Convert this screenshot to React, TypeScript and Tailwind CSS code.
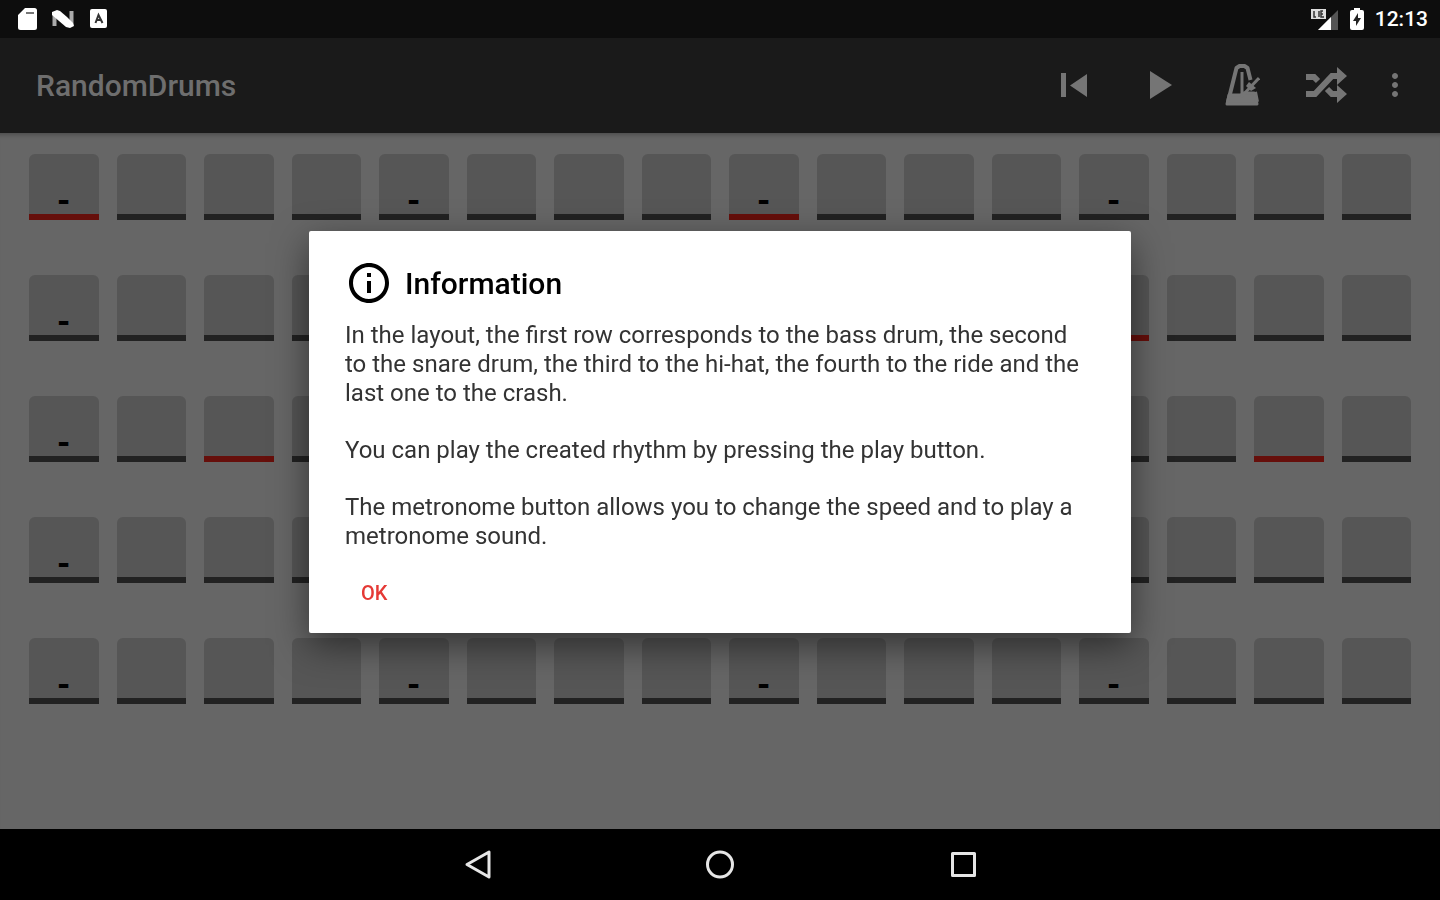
import { useState } from "react";
import { MdMoreVert, MdOutlineInfo, MdPlayArrow } from "react-icons/md";

const ACCENTS = [[0, 8], [4, 12], [2, 14], [], []];
const BEATS = [[0, 4, 8, 12], [0], [0], [0], [0, 4, 8, 12]];
const ROW_NAMES = ["Bass drum", "Snare drum", "Hi-hat", "Ride", "Crash"];

function StatusBar() {
  return (
    <div className="flex h-[38px] items-center justify-between bg-[#0d0d0d] pl-[17px] pr-3 text-white">
      <div className="flex items-center gap-3.5">
        <svg className="h-6 w-5" viewBox="0 0 20 24" fill="#fff" aria-hidden="true">
          <path d="M8 1h9.500a2.500 2.500 0 0 1 2.500 2.500v17a2.500 2.500 0 0 1-2.500 2.500h-14a2.500 2.500 0 0 1-2.500-2.500V8z" />
          <path d="M9 6h8" stroke="#777" strokeWidth="2" />
        </svg>
        <svg className="h-5 w-6" viewBox="0 0 24 20" aria-hidden="true">
          <path d="M3.500 3v14M20.500 2v14" stroke="#aaa" strokeWidth="4" />
          <path d="M1 3l5-2 3 1 7 6 6 6 1 3-4 2-4-1-7-6-7-6z" fill="#fff" />
        </svg>
        <svg className="h-5 w-5" viewBox="0 0 20 20" aria-hidden="true">
          <rect x="1" y="0" width="17" height="19" rx="2" fill="#fff" />
          <path d="M6.500 14l3-8 4 8M8 11h4" stroke="#333" strokeWidth="2" fill="none" />
        </svg>
      </div>
      <div className="flex items-center gap-2.5">
        <svg className="h-6 w-7" viewBox="0 0 28 24" aria-hidden="true">
          <path d="M27 3v20H7z" fill="#555" />
          <path d="M20 10v13H7z" fill="#fff" />
          <rect x="0" y="2" width="15" height="10" fill="#ddd" />
          <path d="M3 4v6h2M8 4v6M12 4h-2v6h3M10 7h2" stroke="#333" strokeWidth="1.500" fill="none" />
        </svg>
        <svg className="h-6 w-4" viewBox="0 0 16 24" aria-hidden="true">
          <path d="M5 1h6v2h2a2 2 0 0 1 2 2v16a2 2 0 0 1-2 2H3a2 2 0 0 1-2-2V5a2 2 0 0 1 2-2h2z" fill="#fff" />
          <path d="M9 6l-5 8h3v5l5-8H9z" fill="#222" />
        </svg>
        <span className="text-[21px] font-medium leading-6">12:13</span>
      </div>
    </div>
  );
}

function Toolbar() {
  return (
    <header className="flex h-[95px] items-center justify-between bg-[#1a1a1a] pl-9 pr-[18px] text-[#757575]">
      <h1 className="text-[30px] font-medium text-[#6e6e6e]">RandomDrums</h1>
      <div className="flex items-center pb-0.5">
        <button aria-label="Back to start" className="flex w-[84px] justify-center">
          <svg className="h-7 w-7" viewBox="0 0 28 28" fill="currentColor" aria-hidden="true">
            <path d="M1 2h5v24H1zM27 3v23L10 14.500z" />
          </svg>
        </button>
        <button aria-label="Play" className="flex w-[84px] justify-center">
          <MdPlayArrow className="h-12 w-12" />
        </button>
        <button aria-label="Metronome" className="flex w-[84px] justify-center">
          <svg className="h-11 w-9" viewBox="0 0 36 44" fill="none" stroke="currentColor" strokeLinejoin="round" aria-hidden="true">
            <path d="M4 39l8.500-34 3-2h5l3 2 3 12M31 29l2 10" strokeWidth="4" />
            <path d="M5 32h12l2-2h11l3 11H3z" fill="currentColor" strokeWidth="3" />
            <path d="M18 9v22" strokeWidth="3" />
            <path d="M17 34l18-19" strokeWidth="3" />
            <path d="M25 19l7 6-5 3-5-5z" fill="currentColor" stroke="none" />
          </svg>
        </button>
        <button aria-label="Shuffle" className="flex w-[84px] justify-center">
          <svg className="h-10 w-11" viewBox="0 0 44 40" fill="none" stroke="currentColor" strokeWidth="6" aria-hidden="true">
            <path d="M2 12h8l4 4M2 29h9l17-18h7M23 24l5 5h6" />
            <path d="M33 2l10 9-10 9zM33 20l10 9-10 9z" fill="currentColor" stroke="none" />
          </svg>
        </button>
        <button aria-label="More options" className="flex w-[54px] justify-center">
          <MdMoreVert className="h-9 w-9" />
        </button>
      </div>
    </header>
  );
}

function Pad({ label, beat, accent }: { label: string; beat: boolean; accent: boolean }) {
  const [on, setOn] = useState(beat);

  return (
    <button
      aria-label={label}
      aria-pressed={on}
      onClick={() => setOn(!on)}
      className={`flex h-[66px] items-end justify-center rounded-t-md border-b-[6px] bg-[#565656] text-[32px] font-black leading-[26px] text-black ${accent ? "border-[#660f0b]" : "border-[#222222]"}`}
    >
      {on ? "-" : ""}
    </button>
  );
}

function InfoDialog({ onClose }: { onClose: () => void }) {
  return (
    <div className="fixed inset-0 flex items-center justify-center px-4 pb-9">
      <div role="dialog" aria-labelledby="info-title" className="w-full max-w-[822px] rounded-xs bg-white px-9 pb-4 pt-7 shadow-[0_12px_36px_rgba(0,0,0,0.5)]">
        <div className="flex h-12 items-center gap-3">
          <MdOutlineInfo className="h-12 w-12 text-black" />
          <h2 id="info-title" className="text-[30px] font-medium text-black">Information</h2>
        </div>
        <div className="mt-3.5 space-y-7 pr-3 text-[24px] leading-[29px] text-[#333333]">
          <p>In the layout, the first row corresponds to the bass drum, the second to the snare drum, the third to the hi-hat, the fourth to the ride and the last one to the crash.</p>
          <p>You can play the created rhythm by pressing the play button.</p>
          <p>The metronome button allows you to change the speed and to play a metronome sound.</p>
        </div>
        <button onClick={onClose} className="mt-4.5 flex h-12 items-center px-4 text-[20px] font-medium text-[#e53935]">
          OK
        </button>
      </div>
    </div>
  );
}

function NavBar() {
  return (
    <nav className="flex h-[71px] items-center justify-center gap-[211px] bg-black">
      <button aria-label="Back">
        <svg className="h-8 w-8" viewBox="0 0 32 32" fill="none" stroke="#e6e6e6" strokeWidth="3" strokeLinejoin="round" aria-hidden="true">
          <path d="M28 3v25L6 15.500z" />
        </svg>
      </button>
      <button aria-label="Home">
        <svg className="h-8 w-8" viewBox="0 0 32 32" fill="none" stroke="#e6e6e6" strokeWidth="3" aria-hidden="true">
          <circle cx="16" cy="15.500" r="12.500" />
        </svg>
      </button>
      <button aria-label="Recent apps">
        <svg className="h-8 w-8" viewBox="0 0 32 32" fill="none" stroke="#e6e6e6" strokeWidth="3" strokeLinejoin="round" aria-hidden="true">
          <rect x="5.500" y="4.500" width="22" height="22" />
        </svg>
      </button>
    </nav>
  );
}

export default function App() {
  const [open, setOpen] = useState(true);

  return (
    <div className="flex min-h-screen flex-col bg-[#666666] font-['Roboto',sans-serif]">
      <StatusBar />
      <Toolbar />
      <main className="flex flex-1 flex-col gap-[55px] px-[29px] pt-[21px] shadow-[inset_0_6px_4px_-4px_rgba(0,0,0,0.25)]">
        {ROW_NAMES.map((name, row) => (
          <div key={name} className="grid grid-cols-16 gap-[18px]">
            {Array.from({ length: 16 }, (_, step) => (
              <Pad key={step} label={`${name} ${step + 1}`} beat={BEATS[row].includes(step)} accent={ACCENTS[row].includes(step)} />
            ))}
          </div>
        ))}
      </main>
      <NavBar />
      {open && <InfoDialog onClose={() => setOpen(false)} />}
    </div>
  );
}
